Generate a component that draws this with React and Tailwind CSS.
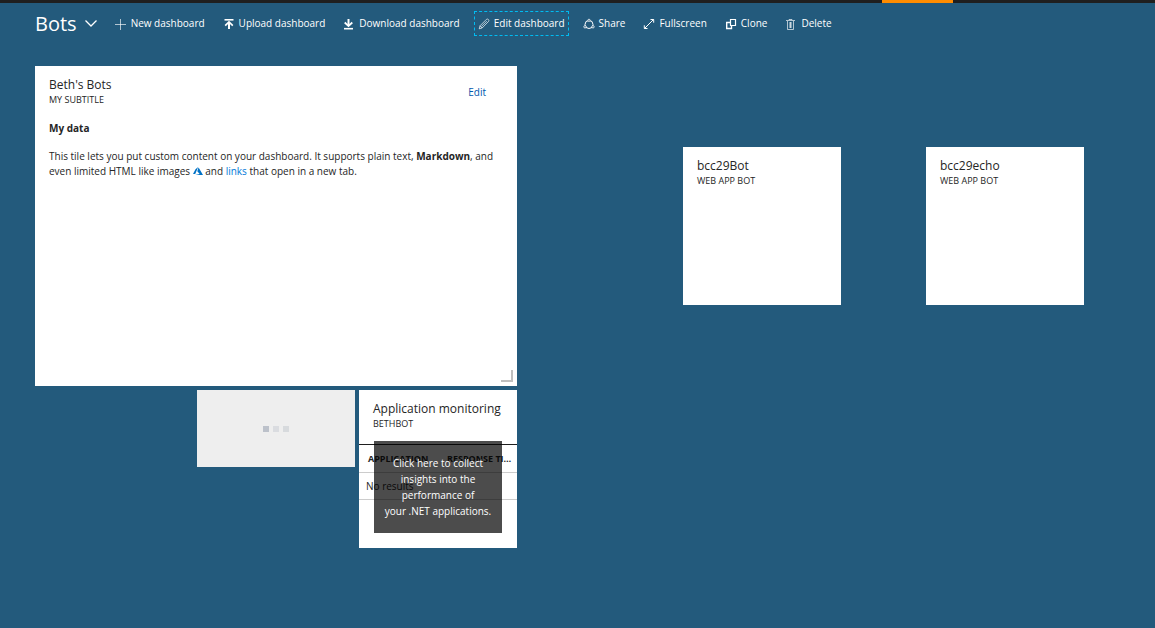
const actions = [
  {
    label: 'New dashboard',
    icon: <path d="M5.5 1v11M0 6.5h11" stroke="currentColor" strokeOpacity="0.65" />,
  },
  {
    label: 'Upload dashboard',
    icon: (
      <>
        <path d="M1.5 1.8h9" stroke="currentColor" strokeWidth="1.6" />
        <path d="M6 4.5V11" stroke="currentColor" strokeWidth="2" />
        <path d="M2.2 7.6 6 4l3.8 3.6" stroke="currentColor" strokeWidth="1.7" />
      </>
    ),
  },
  {
    label: 'Download dashboard',
    icon: (
      <>
        <path d="M1 10.7h9" stroke="currentColor" strokeWidth="1.6" />
        <path d="M5.5 1v6.5" stroke="currentColor" strokeWidth="2" />
        <path d="M1.7 4.5 5.5 8l3.8-3.5" stroke="currentColor" strokeWidth="1.7" />
      </>
    ),
  },
  {
    label: 'Edit dashboard',
    active: true,
    icon: (
      <path
        d="M1.2 10.8 2 7.8 8.4 1.4q1.1-.8 2 .1t.1 2L4.1 10ZM2 7.8 4.1 10M3.4 8.5l5.4-5.4"
        stroke="currentColor"
        strokeWidth="0.9"
        strokeOpacity="0.75"
      />
    ),
  },
  {
    label: 'Share',
    icon: (
      <>
        <circle cx="6" cy="6.5" r="4" stroke="currentColor" />
        <circle cx="6" cy="2.3" r="1.1" fill="#235a7c" stroke="currentColor" strokeWidth="0.8" />
        <circle cx="2" cy="8.8" r="1.2" fill="#235a7c" stroke="currentColor" strokeWidth="0.8" />
        <circle cx="10" cy="8.8" r="1.2" fill="#235a7c" stroke="currentColor" strokeWidth="0.8" />
      </>
    ),
  },
  {
    label: 'Fullscreen',
    icon: <path d="M1.5 10.5l9-9M7.5 1.5h3.2v3.2M1.3 7.3v3.2h3.2" stroke="currentColor" />,
  },
  {
    label: 'Clone',
    icon: (
      <>
        <path d="M5.5 1.5h5v6h-5z" stroke="currentColor" strokeWidth="1.2" />
        <path d="M5 4.5H1.7v6h4.8V8" stroke="currentColor" strokeWidth="1.4" />
      </>
    ),
  },
  {
    label: 'Delete',
    icon: (
      <>
        <path d="M1 2.5h9M4 2V1.500h3V2M2.500 3v8.500h6V3" stroke="currentColor" strokeOpacity="0.65" />
        <path d="M4 4h3v6H4z" fill="currentColor" fillOpacity="0.4" />
        <path d="M5.500 4v6" stroke="currentColor" strokeOpacity="0.6" />
      </>
    ),
  },
];

function Toolbar() {
  return (
    <header className="flex h-[41px] items-center pl-[35px] text-white">
      <button type="button" className="flex items-center gap-2 text-[20px] leading-6">
        <h1>Bots</h1>
        <svg viewBox="0 0 12 12" className="size-3" fill="none" aria-hidden="true">
          <path d="M.5 2.5 6 8l5.5-5.5" stroke="currentColor" strokeWidth="1.3" />
        </svg>
      </button>
      <nav className="ml-3.5 flex items-center gap-2.5">
        {actions.map((a) => (
          <button
            key={a.label}
            type="button"
            className={
              'flex h-[25px] items-center gap-1 whitespace-nowrap border px-[3px] text-[10px] ' +
              (a.active ? 'border-dashed border-[#00bcf2]' : 'border-transparent')
            }
          >
            <svg viewBox="0 0 12 12" className="size-3 shrink-0" fill="none" aria-hidden="true">
              {a.icon}
            </svg>
            {a.label}
          </button>
        ))}
      </nav>
    </header>
  );
}

function TileTitle({ title, subtitle }) {
  return (
    <div className="px-3.5 pt-[11px]">
      <h2 className="whitespace-nowrap text-[12px] leading-4">{title}</h2>
      <p className="text-[9px] font-medium leading-[14px]">{subtitle}</p>
    </div>
  );
}

function MarkdownTile() {
  return (
    <section className="relative col-span-6 col-start-1 row-span-4 row-start-1 bg-white">
      <div className="flex items-start justify-between">
        <TileTitle title="Beth's Bots" subtitle="MY SUBTITLE" />
        <a href="#edit" className="mr-[31px] mt-[18px] text-[10px] leading-4 text-[#0058ad]">
          Edit
        </a>
      </div>
      <div className="px-3.5 pt-3.5 text-[10px] leading-[15px]">
        <h3 className="font-bold">My data</h3>
        <p className="mt-[13px]">
          This tile lets you put custom content on your dashboard. It supports plain text,{' '}
          <strong>Markdown</strong>, and even limited HTML like images{' '}
          <svg viewBox="0 0 10 8" className="inline h-2 w-2.5 align-baseline" role="img" aria-label="Azure">
            <path d="M5.2 0 2.5 2.3 0 7h2.2ZM5.6.6 4.3 4.2 6.7 7.1 2.2 8H10Z" fill="#0072c6" />
          </svg>{' '}
          and{' '}
          <a href="#links" className="text-[#0078d7]">
            links
          </a>{' '}
          that open in a new tab.
        </p>
      </div>
      <span className="absolute bottom-1 right-1 size-3 border-b-2 border-r-2 border-[#bfbfbf]" />
    </section>
  );
}

function LoadingTile() {
  return (
    <section
      aria-label="Loading"
      className="col-span-2 col-start-3 row-start-5 flex items-center justify-center gap-1 bg-[#eeeeee]"
    >
      <span className="size-1.5 bg-[#bcc1ca]" />
      <span className="size-1.5 bg-[#dadce0]" />
      <span className="size-1.5 bg-[#d7dadd]" />
    </section>
  );
}

function MonitoringTile() {
  return (
    <section className="relative col-span-2 col-start-5 row-span-2 row-start-5 bg-white">
      <TileTitle title="Application monitoring" subtitle="BETHBOT" />
      <table className="mt-[13px] w-full table-fixed border-t border-[#1f1f1f]">
        <thead>
          <tr className="h-7 border-b border-[#cccccc] text-left text-[9px]">
            <th className="w-[79px] pl-[9px]">APPLICATION</th>
            <th className="truncate pl-[9px] pr-1">RESPONSE TIME</th>
          </tr>
        </thead>
        <tbody>
          <tr className="h-[27px] border-b border-[#cccccc] text-[10px]">
            <td colSpan={2} className="pl-[7px]">
              No results
            </td>
          </tr>
        </tbody>
      </table>
      <button
        type="button"
        className="absolute inset-x-[15px] bottom-[15px] h-[92px] bg-black/70 text-center text-[10px] leading-4 text-white"
      >
        Click here to collect
        <br />
        insights into the
        <br />
        performance of
        <br />
        your .NET applications.
      </button>
    </section>
  );
}

export default function App() {
  return (
    <div className="min-h-screen bg-[#235a7c] font-['Open_Sans','Noto_Sans',sans-serif] text-[#252525]">
      <div className="flex h-[3px] justify-end bg-[#1f1f1f]">
        <div className="mr-[202px] w-[71px] bg-[#ff8c00]" />
      </div>
      <Toolbar />
      <main className="grid auto-rows-[77px] grid-cols-[repeat(13,77px)] gap-1 pl-[35px] pt-[22px]">
        <MarkdownTile />
        <section className="col-span-2 col-start-9 row-span-2 row-start-2 bg-white">
          <TileTitle title="bcc29Bot" subtitle="WEB APP BOT" />
        </section>
        <section className="col-span-2 col-start-12 row-span-2 row-start-2 bg-white">
          <TileTitle title="bcc29echo" subtitle="WEB APP BOT" />
        </section>
        <LoadingTile />
        <MonitoringTile />
      </main>
    </div>
  );
}
